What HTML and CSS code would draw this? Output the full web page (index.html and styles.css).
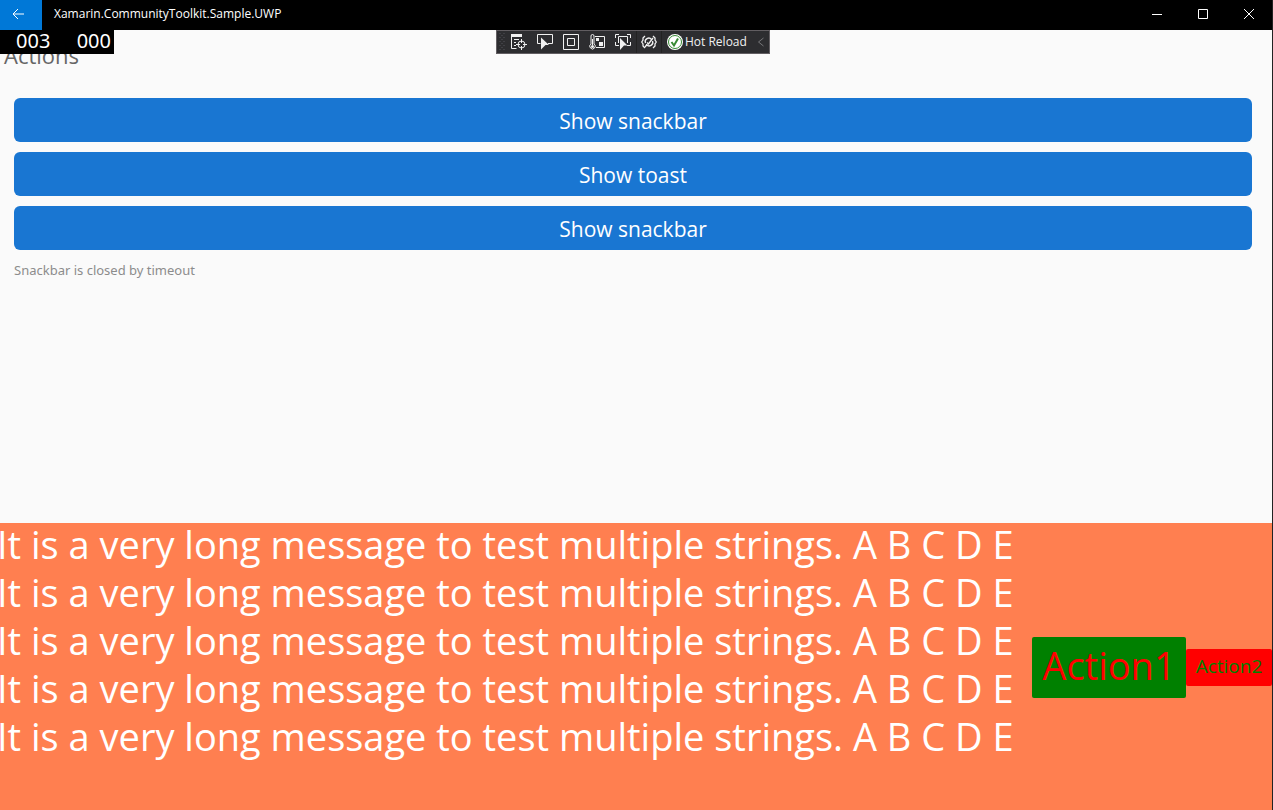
FILE: index.html
```html
<!DOCTYPE html>
<html lang="en">
<head>
<meta charset="utf-8">
<title>Xamarin.CommunityToolkit.Sample.UWP</title>
<link rel="stylesheet" href="styles.css">
</head>
<body>
<div class="window">
  <header class="titlebar">
    <button class="back" aria-label="Back"><svg width="14" height="12" viewBox="0 0 14 12"><path d="M12 6H1M6 1L1 6l5 5"/></svg></button>
    <span class="title">Xamarin.CommunityToolkit.Sample.UWP</span>
    <button class="caption" aria-label="Minimize"><svg width="10" height="10" viewBox="0 0 10 10"><path d="M0 5.5h10"/></svg></button>
    <button class="caption" aria-label="Maximize"><svg width="10" height="10" viewBox="0 0 10 10"><path d="M.5.5h9v9h-9z"/></svg></button>
    <button class="caption" aria-label="Close"><svg width="10" height="10" viewBox="0 0 10 10"><path d="M0 0l10 10M10 0L0 10"/></svg></button>
  </header>
  <div class="body">
    <div class="counters"><span>003</span><span>000</span></div>
    <div class="toolbar">
      <svg class="grip" width="6" height="18" viewBox="0 0 6 18"><path d="M1 0v18M5 0v18" stroke-dasharray="1 3"/><path d="M3 2v16" stroke-dasharray="1 3"/></svg>
      <button class="tool" aria-label="Live Visual Tree"><svg width="16" height="16" viewBox="0 0 16 16"><path class="solid" d="M0 0h11v3H0z"/><path d="M.5 2v12.500h5M3 5.500h5M3 8.500h2M3 11.500h2"/><circle cx="10.500" cy="10.500" r="3.500"/><path d="M10.500 5v4M10.500 12v4M5 10.500h4M12 10.500h4"/></svg></button>
      <button class="tool" aria-label="Select Element"><svg width="16" height="16" viewBox="0 0 16 16"><path d="M3.500 9.500h-3v-9h15v9H11"/><path class="solid" d="M4 3.500l8 7.500H8.500L4 15.500z"/></svg></button>
      <button class="tool" aria-label="Display Layout Adorners"><svg width="16" height="16" viewBox="0 0 16 16"><path d="M.5.500h15v15H.5zM4.500 4.500h7v7h-7z"/></svg></button>
      <button class="tool" aria-label="Diagnostics"><svg width="16" height="16" viewBox="0 0 16 16"><path d="M2 10V2a1.500 1.500 0 0 1 3 0v8a2.700 2.700 0 1 1-3 0z"/><path d="M3.500 5v6M6 2.500h9.500v11H7"/><circle class="solid" cx="3.500" cy="12.500" r="1.500"/><path class="solid" d="M7 4h3v3H7zM10 8h4v4h-4z"/></svg></button>
      <button class="tool" aria-label="Track Focused Element"><svg width="16" height="16" viewBox="0 0 16 16"><path d="M.5 4V.500H4M12 .500h3.500V4M.5 8v3.500H4M12 11.500h3.500V8M3.500 9V2.500h9V9"/><path class="solid" d="M5 4l7.500 7.500H9L5 16z"/></svg></button>
      <button class="tool binding" aria-label="Binding Failures"><svg width="16" height="14" viewBox="0 0 16 14"><path stroke-width="1.300" d="M4 1L2 3v2L.7 7 2 9v2l2 2M12 1l2 2v2l1.300 2L14 9v2l-2 2"/><path stroke-width="1.300" d="M4.500 8a3.500 3.500 0 0 1 6-3.500M11.500 6a3.500 3.500 0 0 1-6 3.500M6 7.500l1.500 1.500L12 3M4 12l2-2.500"/></svg></button>
      <button class="reload"><svg width="16" height="16" viewBox="0 0 16 16"><circle class="halo" cx="8" cy="8" r="8"/><circle class="ring" cx="8" cy="8" r="6.500"/><path class="check" d="M4.500 8l2.500 3.500 4-7"/></svg>Hot Reload</button>
      <button class="collapse" aria-label="Collapse"><svg width="6" height="10" viewBox="0 0 6 10"><path d="M5.500 1l-5 4 5 4"/></svg></button>
    </div>
    <main class="page">
      <h1>Actions</h1>
      <div class="stack">
        <button class="primary">Show snackbar</button>
        <button class="primary">Show toast</button>
        <button class="primary">Show snackbar</button>
        <p class="status">Snackbar is closed by timeout</p>
      </div>
    </main>
    <section class="snackbar">
      <p class="message">It is a very long message to test multiple strings. A B C D E<br>It is a very long message to test multiple strings. A B C D E<br>It is a very long message to test multiple strings. A B C D E<br>It is a very long message to test multiple strings. A B C D E<br>It is a very long message to test multiple strings. A B C D E</p>
      <button class="action first">Action1</button>
      <button class="action second">Action2</button>
    </section>
  </div>
</div>
</body>
</html>
```
FILE: styles.css
```css
* { box-sizing: border-box; }
body {
  margin: 0;
  font-family: "Open Sans", "Noto Sans", sans-serif;
  background: #fafafa;
}
button {
  border: 0;
  padding: 0;
  font: inherit;
  color: inherit;
  background: none;
}
svg { display: block; fill: none; stroke: currentColor; }
.window {
  display: flex;
  flex-direction: column;
  min-height: 100vh;
  overflow: hidden;
  border-right: 1px solid #222;
}
.titlebar {
  display: flex;
  align-items: stretch;
  height: 30px;
  color: #fff;
  background: #000;
}
.back {
  display: flex;
  align-items: center;
  width: 42px;
  padding: 0 0 3px 12px;
  background: #0078d7;
}
.title {
  flex: 1;
  padding-left: 12px;
  font-size: 12px;
  line-height: 28px;
}
.caption {
  display: grid;
  place-items: center;
  width: 46px;
  padding-bottom: 2px;
}
.body {
  position: relative;
  display: flex;
  flex: 1;
  flex-direction: column;
}
.counters {
  position: absolute;
  top: 0;
  left: 0;
  display: flex;
  justify-content: space-between;
  width: 114px;
  height: 24px;
  padding: 0 3px 0 16px;
  font-family: "Noto Sans", sans-serif;
  font-size: 20px;
  line-height: 22px;
  color: #fff;
  background: #000;
}
.toolbar {
  position: absolute;
  top: 0;
  left: 50%;
  display: flex;
  align-items: center;
  width: 274px;
  height: 24px;
  margin-left: -140px;
  border: 1px solid #625e62;
  color: #f1f1f1;
  background: #2d2d30;
}
.grip { flex: none; margin: 0 1px 0 2px; color: #55555a; }
.tool {
  display: grid;
  flex: none;
  place-items: center;
  width: 26px;
  height: 22px;
}
.binding { border: solid #222; border-width: 0 1px; }
.solid { fill: currentColor; stroke: none; }
.reload {
  display: flex;
  flex: 1;
  gap: 2px;
  align-items: center;
  padding-left: 5px;
  font-size: 12px;
  line-height: 20px;
  white-space: nowrap;
}
.halo { fill: #fff; stroke: none; }
.ring { stroke: #388a34; }
.check { stroke: #388a34; stroke-width: 2; }
.collapse { margin-right: 5px; color: #77777a; }
.page { flex: 1; }
h1 {
  margin: 0;
  padding: 9px 0 0 4px;
  font-size: 22px;
  font-weight: 400;
  line-height: 32px;
  color: #666;
}
.stack {
  display: flex;
  flex-direction: column;
  gap: 10px;
  padding: 27px 20px 0 14px;
}
.primary {
  height: 44px;
  padding-top: 2px;
  border-radius: 6px;
  font-size: 21px;
  line-height: 42px;
  color: #fff;
  background: #1976d2;
}
.status {
  margin: 0;
  font-family: "Noto Sans", sans-serif;
  font-size: 13px;
  line-height: 20px;
  color: #8c8c8c;
}
.snackbar {
  display: flex;
  align-items: center;
  padding-top: 1px;
  color: #fff;
  background: #ff7f50;
}
.message {
  flex: 1;
  margin: -4px 0 0 -3px;
  padding-bottom: 50px;
  font-size: 38px;
  line-height: 48px;
  white-space: nowrap;
}
.action { flex: none; border-radius: 2px; white-space: nowrap; }
.first {
  width: 154px;
  height: 61px;
  padding-bottom: 4px;
  font-size: 38px;
  line-height: 56px;
  color: #f00;
  background: #008000;
}
.second {
  width: 86px;
  height: 37px;
  padding-bottom: 2px;
  font-size: 19px;
  line-height: 34px;
  color: #008000;
  background: #f00;
}
```
